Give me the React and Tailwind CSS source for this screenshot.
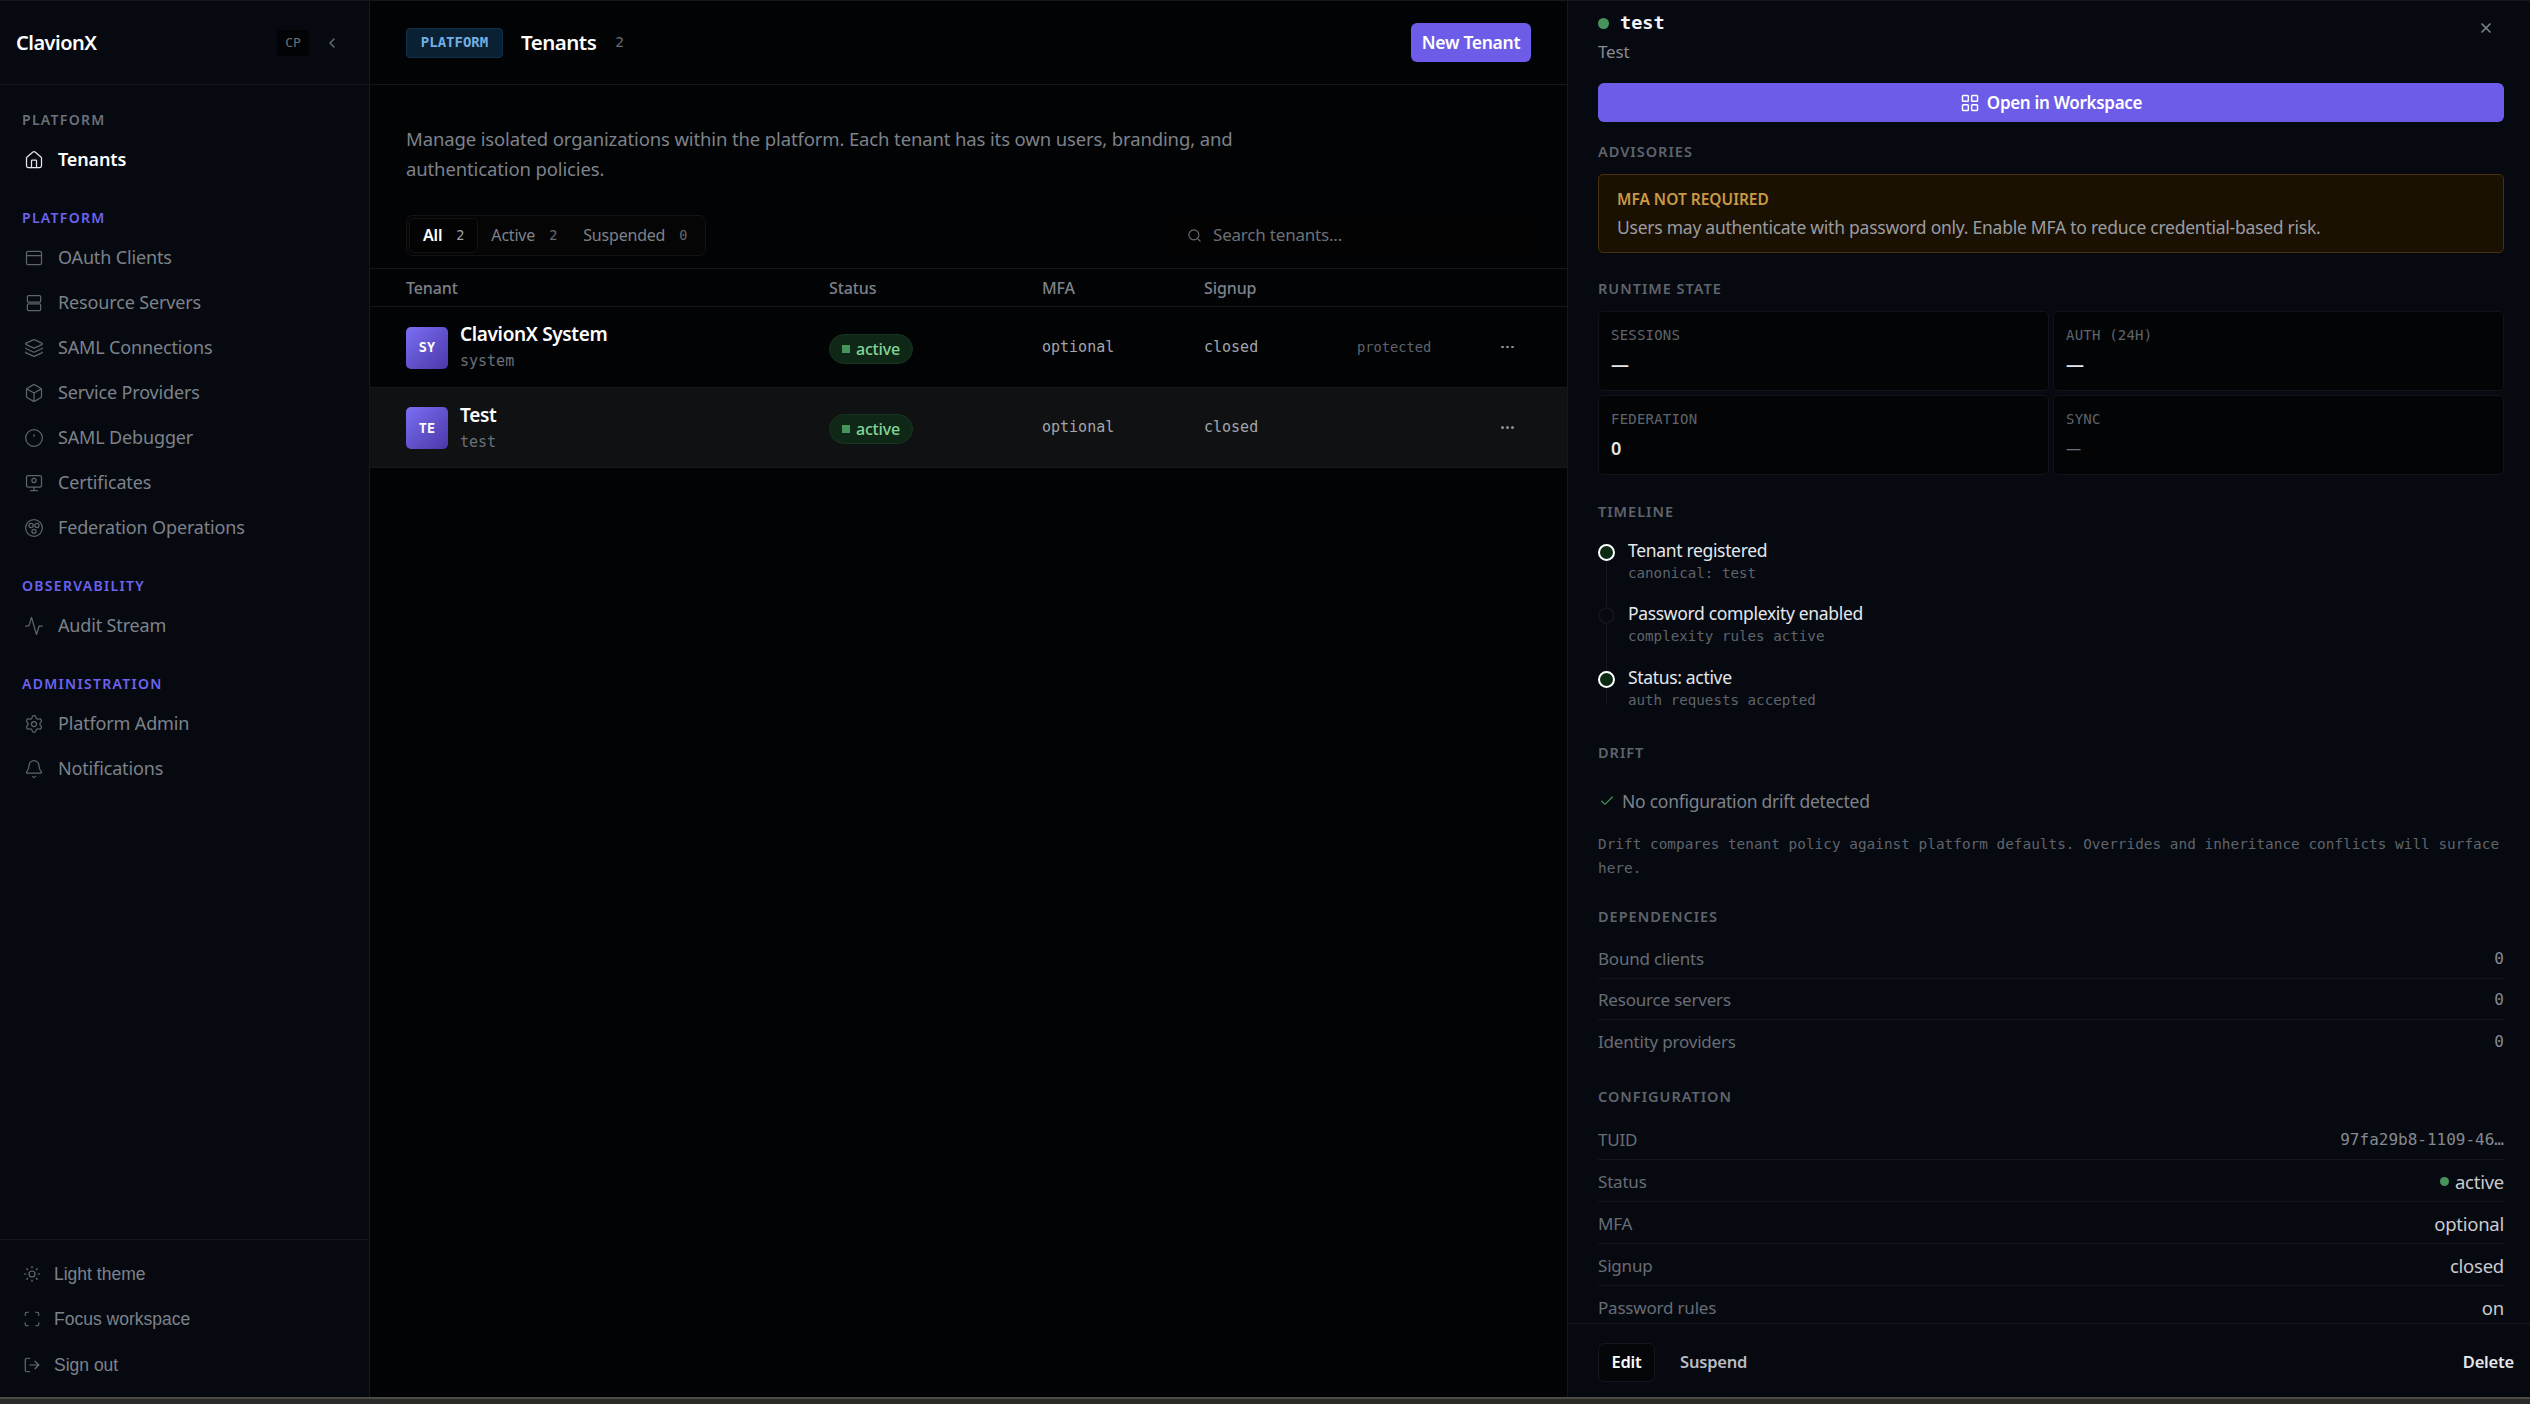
import React from "react";
import { House, Layers, Box, Activity, Settings, Bell, Sun, Scan, LogOut, LayoutGrid, Check, X, Search, ChevronLeft } from "lucide-react";

const MONO = "font-['DejaVu_Sans_Mono','Liberation_Mono',monospace]";

const I = ({ children }) => (
  <svg width="20" height="20" viewBox="0 0 24 24" fill="none" stroke="currentColor" strokeWidth="1.5" strokeLinecap="round" strokeLinejoin="round">{children}</svg>
);
const Clients = () => <I><rect x="3" y="4" width="18" height="16" rx="2" /><path d="M3 9h18" /></I>;
const Servers = () => <I><rect x="4" y="3" width="16" height="8" rx="1.5" /><rect x="4" y="13" width="16" height="8" rx="1.5" /></I>;
const Debug = () => <I><circle cx="12" cy="12" r="10" /><path d="M12 8v2" /></I>;
const Cert = () => <I><rect x="3" y="3" width="18" height="14" rx="2" /><circle cx="12" cy="9" r="2.5" /><path d="M12 17v4M8 21h8" /></I>;
const Fed = () => <I><circle cx="12" cy="12" r="10" /><circle cx="8.5" cy="9" r="2.5" /><circle cx="15.5" cy="9" r="2.5" /><circle cx="12" cy="16" r="2.5" /></I>;

const NavItem = ({ icon, label, active }) => (
  <div className={`flex h-[45px] items-center pl-[24px] ${active ? "text-white font-semibold" : "text-[#7d828a]"}`}>
    <span className={`flex w-[34px] shrink-0 ${active ? "text-[#e5e7eb]" : "text-[#5f646c]"}`}>{icon}</span>
    <span className="text-[18px] tracking-[-0.15px]">{label}</span>
  </div>
);

const NavLabel = ({ children, indigo, className }) => (
  <div className={`pl-[22px] h-[18px] flex items-center text-[14px] font-semibold tracking-[1.3px] ${indigo ? "text-[#6c63f0]" : "text-[#6b7078]"} ${className}`}>{children}</div>
);

const FootItem = ({ icon, label }) => (
  <div className="flex h-[45.5px] items-center pl-[23px] text-[#7d828a]">
    <span className="w-[31px] flex text-[#6b7078]">{icon}</span>
    <span className="font-['Liberation_Sans',sans-serif] text-[17.5px]">{label}</span>
  </div>
);

const Sidebar = () => (
  <aside className="flex w-[370px] shrink-0 flex-col border-r border-[#14171d] bg-[#060910]">
    <div className="flex h-[84px] shrink-0 items-center border-b border-[#14171d] pl-[16px]">
      <span className="w-[261px] text-[20px] font-semibold tracking-[-0.5px] text-white">ClavionX</span>
      <span className={`flex h-[26px] w-[32px] items-center justify-center rounded-[3px] bg-[#020305] text-[13px] text-[#6b7078] ${MONO}`}>CP</span>
      <span className="ml-[15px] text-[#6b7078]"><ChevronLeft size={16} /></span>
    </div>
    <div className="flex-1 pt-[25.5px]">
      <NavLabel>PLATFORM</NavLabel>
      <div className="mt-[8.5px]"><NavItem active icon={<House size={20} strokeWidth={1.5} />} label="Tenants" /></div>
      <NavLabel indigo className="mt-[26.5px]">PLATFORM</NavLabel>
      <div className="mt-[8.5px]">
        <NavItem icon={<Clients />} label="OAuth Clients" />
        <NavItem icon={<Servers />} label="Resource Servers" />
        <NavItem icon={<Layers size={20} strokeWidth={1.5} />} label="SAML Connections" />
        <NavItem icon={<Box size={20} strokeWidth={1.5} />} label="Service Providers" />
        <NavItem icon={<Debug />} label="SAML Debugger" />
        <NavItem icon={<Cert />} label="Certificates" />
        <NavItem icon={<Fed />} label="Federation Operations" />
      </div>
      <NavLabel indigo className="mt-[26.5px]">OBSERVABILITY</NavLabel>
      <div className="mt-[8.5px]"><NavItem icon={<Activity size={20} strokeWidth={1.5} />} label="Audit Stream" /></div>
      <NavLabel indigo className="mt-[26.5px]">ADMINISTRATION</NavLabel>
      <div className="mt-[8.5px]">
        <NavItem icon={<Settings size={20} strokeWidth={1.5} />} label="Platform Admin" />
        <NavItem icon={<Bell size={20} strokeWidth={1.5} />} label="Notifications" />
      </div>
    </div>
    <div className="h-[158px] shrink-0 border-t border-[#14171d] pt-[11px]">
      <FootItem icon={<Sun size={18} strokeWidth={1.5} />} label="Light theme" />
      <FootItem icon={<Scan size={18} strokeWidth={1.5} />} label="Focus workspace" />
      <FootItem icon={<LogOut size={18} strokeWidth={1.5} />} label="Sign out" />
    </div>
  </aside>
);

const Tab = ({ label, n, active }) => (
  <div className={`flex h-[35px] items-center gap-[14px] rounded-[5px] px-[13px] ${active ? "border border-[#121316] bg-[#030303] text-white font-semibold" : "text-[#7d828a]"}`}>
    <span className="text-[16px] tracking-[-0.2px]">{label}</span>
    <span className={`text-[13.5px] ${MONO} ${active ? "font-normal text-[#9ca0a6]" : "text-[#666b72]"}`}>{n}</span>
  </div>
);

const Row = ({ abbr, name, sub, tag, hover, h }) => (
  <div className={`flex items-center border-b border-[#14171d] pl-[36px] ${h} ${hover ? "bg-[#101113]" : ""}`}>
    <div className="flex w-[423px] items-center gap-[12px]">
      <div className={`mt-[1px] flex h-[42px] w-[42px] items-center justify-center rounded-[5px] bg-gradient-to-br from-[#7c6ff4] to-[#4a37a8] text-[13.5px] font-bold text-white ${MONO}`}>{abbr}</div>
      <div className="flex flex-col">
        <span className="text-[19px] leading-[24px] font-semibold tracking-[-0.35px] text-white">{name}</span>
        <span className={`mt-[4px] text-[15px] leading-[22px] text-[#6b7078] ${MONO}`}>{sub}</span>
      </div>
    </div>
    <div className="w-[213px] pt-[3px]">
      <span className="inline-flex h-[30px] w-[84px] items-center gap-[6px] rounded-full border border-[#16351f] bg-[#0e2716] pl-[12px]">
        <span className="h-[8px] w-[8px] bg-[#46945c]" />
        <span className="text-[16px] font-medium tracking-[-0.2px] text-[#84d497]">active</span>
      </span>
    </div>
    <div className={`w-[162px] text-[15px] text-[#a2a6ac] ${MONO}`}>optional</div>
    <div className={`w-[153px] text-[15px] text-[#a2a6ac] ${MONO}`}>closed</div>
    <div className={`w-[144px] text-[13.7px] text-[#5f646c] ${MONO}`}>{tag}</div>
    <div className="flex gap-[2.5px]">
      <span className="h-[2.5px] w-[2.5px] rounded-full bg-[#8b8f96]" />
      <span className="h-[2.5px] w-[2.5px] rounded-full bg-[#8b8f96]" />
      <span className="h-[2.5px] w-[2.5px] rounded-full bg-[#8b8f96]" />
    </div>
  </div>
);

const Main = () => (
  <main className="flex min-w-0 flex-1 flex-col bg-[#020305]">
    <div className="flex h-[84px] shrink-0 items-center border-b border-[#14171d] pl-[36px] pr-[36px]">
      <span className={`flex h-[30px] w-[97px] items-center justify-center rounded-[4px] border border-[#11304c] bg-[#0a2033] text-[14px] font-bold text-[#74aee0] ${MONO}`}>PLATFORM</span>
      <span className="ml-[18px] text-[20.5px] font-semibold tracking-[-0.5px] text-white">Tenants</span>
      <span className={`ml-[19px] text-[14.5px] text-[#666b72] ${MONO}`}>2</span>
      <span className="ml-auto flex h-[39px] w-[120px] items-center justify-center rounded-[6px] bg-[#6c5ce7] text-[17.5px] font-semibold tracking-[-0.3px] text-white">New Tenant</span>
    </div>
    <div className="pl-[36px] pt-[39px]">
      <p className="max-w-[850px] text-[18.5px] leading-[30px] tracking-[-0.13px] text-[#7d828a]">Manage isolated organizations within the platform. Each tenant has its own users, branding, and authentication policies.</p>
    </div>
    <div className="mt-[30px] flex h-[42px] items-center justify-between pl-[36px] pr-[36px]">
      <div className="flex h-[41px] w-[300px] items-center rounded-[6px] border border-[#121316] bg-[#050505] pl-[2px]">
        <Tab active label="All" n="2" />
        <Tab label="Active" n="2" />
        <Tab label="Suspended" n="0" />
      </div>
      <div className="flex h-[42px] w-[360px] items-center rounded-[6px] bg-[#030303] pl-[16px] text-[#6b7078]">
        <Search size={15} strokeWidth={1.75} />
        <span className="ml-[11px] text-[17px] tracking-[-0.2px]">Search tenants...</span>
      </div>
    </div>
    <div className="mt-[12px] flex h-[39px] items-center border-y border-[#14171d] pl-[36px] text-[16px] font-medium tracking-[-0.1px] text-[#7d828a]">
      <span className="w-[423px]">Tenant</span>
      <span className="w-[213px]">Status</span>
      <span className="w-[162px]">MFA</span>
      <span>Signup</span>
    </div>
    <Row h="h-[81px]" abbr="SY" name="ClavionX System" sub="system" tag="protected" />
    <Row h="h-[80px]" hover abbr="TE" name="Test" sub="test" />
  </main>
);

const Head = ({ children, className }) => (
  <div className={`flex h-[18px] items-center pt-[1px] text-[14.5px] font-semibold tracking-[1px] text-[#5f646c] ${className}`}>{children}</div>
);

const Stat = ({ label, value, small }) => (
  <div className="h-[80px] rounded-[5px] border border-[#10131a] bg-[#030405] pl-[12px] pt-[15px]">
    <div className={`text-[14px] leading-[16px] tracking-[0.2px] text-[#5f646c] ${MONO}`}>{label}</div>
    <div className={`mt-[9px] leading-[24px] ${small ? "text-[15px] text-[#6b7078]" : "text-[18px] font-semibold text-[#e5e7eb]"}`}>{value}</div>
  </div>
);

const Event = ({ title, sub, dim, className }) => (
  <div className={`relative flex gap-[13px] ${className}`}>
    <span className={`mt-[5px] h-[17px] w-[17px] shrink-0 rounded-full border-2 ${dim ? "border-[#11141a] bg-[#060910]" : "border-white bg-[#0c2a12]"}`} />
    <div>
      <div className="text-[17.5px] leading-[22px] tracking-[-0.33px] text-[#e5e7eb]">{title}</div>
      <div className={`text-[14.2px] leading-[20px] mt-[2px] -mb-[1px] text-[#5f646c] ${MONO}`}>{sub}</div>
    </div>
  </div>
);

const KV = ({ k, v, h, mono, last }) => (
  <div className={`flex items-center justify-between pt-[2px] ${h} ${last ? "" : "border-b border-[#12151b]"}`}>
    <span className="text-[17px] tracking-[-0.2px] text-[#686d75]">{k}</span>
    <span className={mono ? `text-[16px] text-[#85898f] ${MONO}` : "flex items-center gap-[6px] text-[18.5px] tracking-[-0.25px] text-[#c9cbcf]"}>{v}</span>
  </div>
);

const Panel = () => (
  <section className="flex w-[963px] shrink-0 flex-col border-l border-[#14171d] bg-[#060910]">
    <div className="relative min-h-0 flex-1 overflow-hidden pl-[30px] pr-[26px] pt-[13px]">
      <div className="flex h-[18px] items-center gap-[11px]">
        <span className="h-[11px] w-[11px] rounded-full bg-[#46945c]" />
        <span className={`text-[18.5px] font-bold text-[#f3f4f6] ${MONO}`}>test</span>
      </div>
      <span className="absolute right-[36px] top-[19px] text-[#7d828a]"><X size={16} strokeWidth={2.5} /></span>
      <div className="mt-[8px] h-[24px] text-[17px] leading-[24px] tracking-[-0.2px] text-[#868a91]">Test</div>
      <div className="mt-[19px] flex h-[39px] items-center justify-center gap-[7px] rounded-[6px] bg-[#6c5ce7] text-[17px] font-semibold tracking-[-0.3px] text-white">
        <LayoutGrid size={20} strokeWidth={1.75} />
        <span>Open in Workspace</span>
      </div>
      <Head className="mt-[20px]">ADVISORIES</Head>
      <div className="mt-[14px] h-[79px] rounded-[5px] border border-[#4a3208] bg-[#1b1103] pl-[18px] pt-[14px]">
        <div className="h-[20px] text-[15.5px] font-semibold leading-[20px] text-[#c89a45]">MFA NOT REQUIRED</div>
        <div className="mt-[7px] text-[17.5px] leading-[22px] tracking-[-0.25px] text-[#9a9ca0]">Users may authenticate with password only. Enable MFA to reduce credential-based risk.</div>
      </div>
      <Head className="mt-[26px]">RUNTIME STATE</Head>
      <div className="mt-[14px] grid grid-cols-2 gap-[4px]">
        <Stat label="SESSIONS" value="—" />
        <Stat label="AUTH (24H)" value="—" />
        <Stat label="FEDERATION" value="0" />
        <Stat label="SYNC" value="—" small />
      </div>
      <Head className="mt-[27px]">TIMELINE</Head>
      <div className="relative mt-[19px]">
        <span className="absolute left-[8px] top-[20px] h-[146px] w-px bg-[#14171d]" />
        <Event title="Tenant registered" sub="canonical: test" />
        <Event dim title="Password complexity enabled" sub="complexity rules active" className="mt-[20px]" />
        <Event title="Status: active" sub="auth requests accepted" className="mt-[21px]" />
      </div>
      <Head className="mt-[34px]">DRIFT</Head>
      <div className="mt-[28px] flex h-[24px] items-center gap-[7px] text-[17.5px] tracking-[-0.25px] text-[#7d828a]">
        <span className="ml-[1px] text-[#3f9457]"><Check size={16} strokeWidth={1.75} /></span>
        <span>No configuration drift detected</span>
      </div>
      <p className={`mt-[19px] text-[14.4px] leading-[24px] text-[#5f646c] ${MONO}`}>Drift compares tenant policy against platform defaults. Overrides and inheritance conflicts will surface here.</p>
      <Head className="mt-[27px]">DEPENDENCIES</Head>
      <div className="mt-[13px]">
        <KV h="h-[41px]" k="Bound clients" v="0" mono />
        <KV h="h-[41px]" k="Resource servers" v="0" mono />
        <KV h="h-[41px]" k="Identity providers" v="0" mono last />
      </div>
      <Head className="mt-[26px]">CONFIGURATION</Head>
      <div className="mt-[13px]">
        <KV h="h-[42px]" k="TUID" v="97fa29b8-1109-46…" mono />
        <KV h="h-[42px]" k="Status" v={<><span className="h-[9px] w-[9px] rounded-full bg-[#46945c]" />active</>} />
        <KV h="h-[42px]" k="MFA" v="optional" />
        <KV h="h-[42px]" k="Signup" v="closed" />
        <KV h="h-[42px]" k="Password rules" v="on" />
      </div>
    </div>
    <div className="flex h-[74px] shrink-0 items-center border-t border-[#14171d] pl-[30px] pr-[16px] pt-[3px]">
      <span className="flex h-[39px] w-[57px] items-center justify-center rounded-[6px] border border-[#14171d] bg-[#04060a] text-[16.5px] font-semibold tracking-[-0.2px] text-white">Edit</span>
      <span className="ml-[25px] text-[16.5px] font-semibold tracking-[-0.2px] text-[#b9bcc2]">Suspend</span>
      <span className="ml-auto text-[16.5px] font-semibold tracking-[-0.2px] text-[#e5e7eb]">Delete</span>
    </div>
  </section>
);

export default function App() {
  return (
    <div className="flex h-[1404px] w-[2530px] flex-col overflow-hidden bg-gradient-to-r from-[#282a28] via-[#2c2a24] to-[#2a2a28] font-['Noto_Sans',sans-serif]">
      <div className="flex h-[1397px] shrink-0 border-t border-[#14171d]">
        <Sidebar />
        <Main />
        <Panel />
      </div>
      <div className="h-[2px] shrink-0 bg-[#4b4b46]" />
    </div>
  );
}
